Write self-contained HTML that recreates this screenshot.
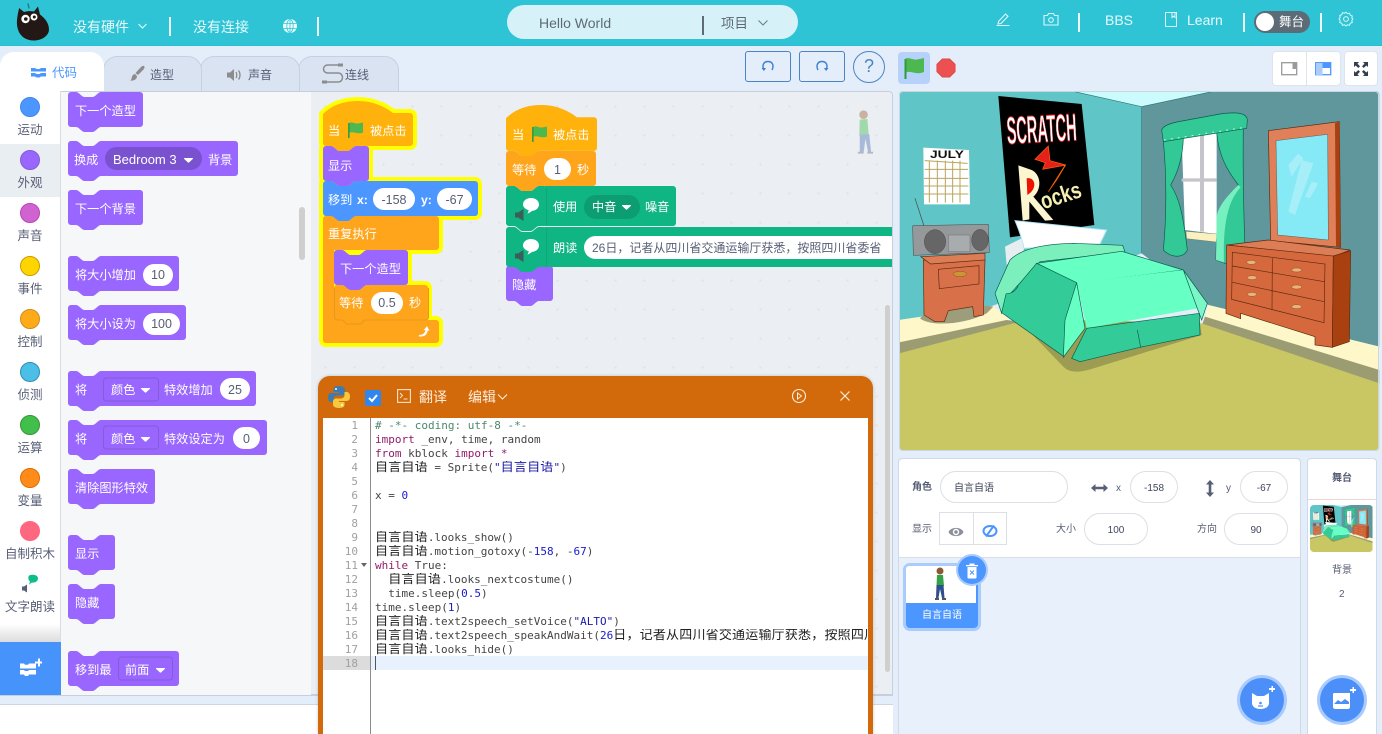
<!DOCTYPE html>
<html lang="zh">
<head>
<meta charset="utf-8">
<title>Hello World</title>
<style>
html,body{margin:0;padding:0}
body{position:relative;width:1382px;height:734px;overflow:hidden;background:#e4edfa;font-family:"Liberation Sans","Noto Sans CJK SC",sans-serif;color:#575e75}
.a{position:absolute}
.t{position:absolute;white-space:nowrap;line-height:1}
.hd{color:#e8fbfd;font-size:14px}
.dv{position:absolute;width:2px;height:19px;background:#eafcfe}
.tab{position:absolute;top:56px;height:35px;background:#d9e3f2;border:1px solid #c6d0e0;border-bottom:0;border-radius:14px 14px 0 0;box-sizing:border-box}
.cat{position:absolute;left:0;width:60px;text-align:center;font-size:12.5px;line-height:14px;color:#575e75;margin-top:1px}
.dot{position:absolute;left:20px;width:20px;height:20px;border-radius:50%;box-sizing:border-box}
.btn{position:absolute;box-sizing:border-box;border:1px solid #4a84c4;border-radius:3px;width:46px;height:31px;top:51px}
.inp{position:absolute;box-sizing:border-box;background:#fff;border:1px solid #dcdfe4;border-radius:16px;height:32px;font-size:10px;line-height:33px;text-align:center;color:#40465a}
.lb{position:absolute;font-size:10px;line-height:12px;color:#575e75;white-space:nowrap;margin-top:2px}
.ln{position:absolute;left:323px;width:35px;text-align:right;font:11px/14px "DejaVu Sans Mono",monospace;color:#a0a0a0;margin-top:1px}
.cd{position:absolute;left:375px;width:493px;overflow:hidden;white-space:pre;font:11px/14px "DejaVu Sans Mono","Noto Sans CJK SC",monospace;color:#444;margin-top:1px}
.cd i{font-style:normal;font-family:"Noto Sans CJK SC",sans-serif;font-size:13px;letter-spacing:.2px;color:#222;line-height:0}
.k{color:#931a68}.n{color:#1a1acd}.s{color:#1a1aa6}.c{color:#4c886b}
svg text{font-family:"Liberation Sans","Noto Sans CJK SC",sans-serif}
</style>
</head>
<body>
<!-- header -->
<div class="a" style="left:0;top:0;width:1382px;height:46px;background:#2ec4d6;border-bottom:1px solid #29bfd2;box-sizing:border-box"></div>
<svg class="a" style="left:14px;top:0" width="40" height="44" viewBox="0 0 40 44"><path d="M5 8l5 4c3-1 7-1 10-.5l4-5 2 8c4 3 9 8 9 15 0 6-7 11-15 11-8 0-14-4-16-11-2-6-1-12 1-21z" fill="#231815"/><path d="M14 3.500l1 5" stroke="#1c7f8c" stroke-width="1.500"/><circle cx="11.500" cy="19" r="4.200" fill="#fff"/><circle cx="11.800" cy="19" r="1.800" fill="#231815"/><circle cx="20" cy="17" r="3.500" fill="#fff"/><circle cx="20.300" cy="17" r="1.500" fill="#231815"/></svg>
<div class="t hd" style="left:73px;top:20px">没有硬件</div>
<svg class="a" style="left:137px;top:23px" width="11" height="7"><path d="M1.500 1l4 4 4-4" fill="none" stroke="#d8f6fa" stroke-width="1.200"/></svg>
<div class="dv" style="left:169px;top:17px"></div>
<div class="t hd" style="left:193px;top:20px">没有连接</div>
<svg class="a" style="left:282px;top:18px" width="16" height="16" viewBox="0 0 16 16"><circle cx="8" cy="8" r="7" fill="#eafcfe"/><g fill="none" stroke="#2ec4d6" stroke-width=".8"><ellipse cx="8" cy="8" rx="3.200" ry="6.500"/><path d="M1.500 5.500h13M1.500 10.500h13M8 1.500v13"/></g></svg>
<div class="dv" style="left:317px;top:17px"></div>
<div class="a" style="left:507px;top:5px;width:291px;height:34px;border-radius:17px;background:#d6f2f8"></div>
<div class="t" style="left:539px;top:16px;font-size:14px;color:#5e6b74">Hello World</div>
<div class="a" style="left:702px;top:16px;width:1.500px;height:19px;background:#5e6b74"></div>
<div class="t" style="left:721px;top:16px;font-size:13.500px;color:#5e6b74;margin-top:1px">项目</div>
<svg class="a" style="left:757px;top:19px" width="12" height="8"><path d="M1.500 1.500l4.500 4.500 4.500-4.500" fill="none" stroke="#6b7a83" stroke-width="1"/></svg>
<svg class="a" style="left:995px;top:11px" width="16" height="16" viewBox="0 0 16 16"><path d="M3.500 10.500l7-7.500 2.500 2.300-7 7.200-3 .5zM1.500 14.500h13" fill="none" stroke="#dcf7fb" stroke-width="1.100"/></svg>
<svg class="a" style="left:1043px;top:12px" width="16" height="14" viewBox="0 0 16 14"><path d="M1 3.500h3.500l1-2h5l1 2H15v9.500H1z" fill="none" stroke="#dcf7fb" stroke-width="1.100"/><circle cx="8" cy="8" r="2.300" fill="none" stroke="#dcf7fb" stroke-width="1.100"/></svg>
<div class="dv" style="left:1078px;top:13px"></div>
<div class="t hd" style="left:1105px;top:13px">BBS</div>
<svg class="a" style="left:1164px;top:11px" width="14" height="17" viewBox="0 0 14 17"><path d="M1.500 1.500h11v14h-11zM8 1.500v5l1.500-1.300L11 6.500v-5" fill="none" stroke="#dcf7fb" stroke-width="1"/></svg>
<div class="t hd" style="left:1187px;top:13px">Learn</div>
<div class="dv" style="left:1243px;top:13px"></div>
<div class="a" style="left:1254px;top:11px;width:56px;height:22px;border-radius:11px;background:#5c6b76"></div>
<div class="a" style="left:1256px;top:13px;width:18px;height:18px;border-radius:50%;background:#fff"></div>
<div class="t" style="left:1279px;top:16px;font-size:12.500px;color:#fff">舞台</div>
<div class="dv" style="left:1320px;top:13px"></div>
<svg class="a" style="left:1338px;top:11px" width="16" height="16" viewBox="0 0 16 16"><path d="M8 1.200l1.500 1.500 2-.5.800 2 2 .8-.5 2L15 8l-1.200 1.500.5 2-2 .8-.8 2-2-.5L8 15l-1.500-1.200-2 .5-.8-2-2-.8.5-2L1 8l1.200-1.500-.5-2 2-.8.800-2 2 .5z" fill="none" stroke="#dcf7fb" stroke-width="1"/><circle cx="8" cy="8" r="2.400" fill="none" stroke="#dcf7fb" stroke-width="1"/></svg>

<!-- tabs -->
<div class="tab" style="left:298px;width:101px"></div>
<div class="tab" style="left:200px;width:100px"></div>
<div class="tab" style="left:103px;width:99px"></div>
<div class="a" style="left:0;top:52px;width:104px;height:39px;background:#fff;border-radius:14px 14px 0 0"></div>
<svg class="a" style="left:31px;top:67px" width="15" height="11" viewBox="0 0 15 11"><path d="M0 1h4l1.500 1h3L10 1h5v3.500H0zM0 6h4l1.500 1h3L10 6h5v3.500H10L8.500 10.500h-3L4 9.500H0z" fill="#4c97ff"/></svg>
<div class="t" style="left:52px;top:67px;font-size:12.500px;color:#4c97ff">代码</div>
<svg class="a" style="left:129px;top:65px" width="17" height="18" viewBox="0 0 17 18"><path d="M15 1c1 1 .5 2.500-1 4l-5 5-2.500-2 5-5.500C13 1 14 .5 15 1zM6 9l2 2c0 3-2.500 5-7 4.500 2-1 1.500-2.500 2-4 .5-1.500 2-2.500 3-2.500z" fill="#8c8c8c"/></svg>
<div class="t" style="left:150px;top:69px;font-size:12px;color:#575e75">造型</div>
<svg class="a" style="left:227px;top:68px" width="16" height="14" viewBox="0 0 16 14"><path d="M0 4.500h3L7 1v12L3 9.500H0z" fill="#8c8c8c"/><path d="M9 4c1 1.500 1 4.500 0 6M11.500 2.500c2 2.500 2 6.500 0 9" stroke="#8c8c8c" stroke-width="1.300" fill="none"/></svg>
<div class="t" style="left:248px;top:69px;font-size:12px;color:#575e75">声音</div>
<svg class="a" style="left:321px;top:62px" width="24" height="24" viewBox="0 0 24 24"><path d="M19 3H7c-6 0-6 8 0 8h10c6 0 6 9 0 9H4" fill="none" stroke="#8c8c8c" stroke-width="1.500"/><rect x="17" y="1.500" width="5" height="3" fill="#8c8c8c"/><rect x="1" y="18.500" width="5" height="3" fill="#8c8c8c"/></svg>
<div class="t" style="left:345px;top:69px;font-size:12px;color:#575e75">连线</div>

<!-- toolbar -->
<div class="btn" style="left:745px"></div>
<div class="btn" style="left:799px"></div>
<svg class="a" style="left:761px;top:60px" width="14" height="12" viewBox="0 0 14 12"><path d="M3 10C.5 5 3 1.500 7 1.500s6.500 3.500 4 8.500" fill="none" stroke="#3c7fd0" stroke-width="1.400"/><path d="M0.500 8l2.500 3L5 8z" fill="#3c7fd0"/></svg>
<svg class="a" style="left:815px;top:60px" width="14" height="12" viewBox="0 0 14 12"><path d="M3 10C.5 5 3 1.500 7 1.500s6.500 3.500 4 8.500" fill="none" stroke="#3c7fd0" stroke-width="1.400"/><path d="M9 8l2 3 2.500-3z" fill="#3c7fd0"/></svg>
<div class="a" style="left:853px;top:51px;width:32px;height:32px;box-sizing:border-box;border:1px solid #4a84c4;border-radius:50%;text-align:center;font-size:18px;line-height:29px;color:#4a84c4">?</div>
<div class="a" style="left:898px;top:52px;width:32px;height:32px;border-radius:4px;background:#b6d2fa"></div>
<svg class="a" style="left:904px;top:57px" width="21" height="22" viewBox="0 0 21 22"><path d="M1 2c4-2.500 8 1.500 12 .5 2.500-.5 5-1 7-1.500v14c-3 1-5 1.500-8 1-3.500-.5-7-2-10-.5z" fill="#4cb84f"/><rect x="0.500" y="2" width="2" height="20" fill="#2f9b3c"/></svg>
<svg class="a" style="left:936px;top:58px" width="20" height="20" viewBox="0 0 22 22"><path d="M7 1h8l6 6v8l-6 6H7l-6-6V7z" fill="#ec5050" stroke="#e04848" stroke-width="1" stroke-linejoin="round"/></svg>
<div class="a" style="left:1273px;top:52px;width:67px;height:33px;background:#fff;box-shadow:0 0 0 1px #dde4ee;border-radius:3px"></div>
<div class="a" style="left:1306px;top:52px;width:1px;height:33px;background:#dde4ee"></div>
<div class="a" style="left:1345px;top:52px;width:32px;height:33px;background:#fff;box-shadow:0 0 0 1px #dde4ee;border-radius:3px"></div>
<svg class="a" style="left:1281px;top:62px" width="18" height="14" viewBox="0 0 18 14"><rect x=".7" y=".7" width="15" height="12" fill="none" stroke="#9a9a9a" stroke-width="1.300"/><rect x="11.500" y="1" width="4" height="6" fill="#9a9a9a"/></svg>
<svg class="a" style="left:1315px;top:62px" width="18" height="14" viewBox="0 0 18 14"><rect x=".7" y=".7" width="15" height="12" fill="#fff" stroke="#4c97ff" stroke-width="1.300"/><rect x="1" y="1" width="6.500" height="12" fill="#a9ccfd"/><rect x="7.500" y="1" width="8" height="5" fill="#4c97ff"/></svg>
<svg class="a" style="left:1354px;top:62px" width="14" height="14" viewBox="0 0 14 14"><path d="M0 0h5L3.500 1.700 6 4.300 4.300 6 1.700 3.500 0 5zM14 0v5l-1.700-1.500L9.700 6 8 4.300l2.500-2.600L9 0zM0 14V9l1.700 1.500L4.300 8 6 9.700l-2.500 2.600L5 14zM14 14H9l1.500-1.700L8 9.700 9.700 8l2.600 2.500L14 9z" fill="#333f4d"/></svg>

<!-- categories -->
<div class="a" style="left:0;top:91px;width:61px;height:551px;background:#fff;border-right:1px solid #d9dde3;box-sizing:border-box"></div>
<div class="a" style="left:0;top:144px;width:60px;height:53px;background:#e9eef2"></div>
<div class="a" style="left:0;top:624px;width:60px;height:18px;background:linear-gradient(#fff,#dcdcdc)"></div>
<div class="dot" style="top:97px;background:#4c97ff;border:1px solid #3f87e8"></div><div class="cat" style="top:122px">运动</div>
<div class="dot" style="top:150px;background:#9966ff;border:1px solid #855cd6"></div><div class="cat" style="top:175px">外观</div>
<div class="dot" style="top:203px;background:#cf63cf;border:1px solid #bd42bd"></div><div class="cat" style="top:228px">声音</div>
<div class="dot" style="top:256px;background:#ffd500;border:1px solid #cc9900"></div><div class="cat" style="top:281px">事件</div>
<div class="dot" style="top:309px;background:#ffab19;border:1px solid #cf8b17"></div><div class="cat" style="top:334px">控制</div>
<div class="dot" style="top:362px;background:#4cbfe6;border:1px solid #2e8eb8"></div><div class="cat" style="top:387px">侦测</div>
<div class="dot" style="top:415px;background:#40bf4a;border:1px solid #389438"></div><div class="cat" style="top:440px">运算</div>
<div class="dot" style="top:468px;background:#ff8c1a;border:1px solid #db6e00"></div><div class="cat" style="top:493px">变量</div>
<div class="dot" style="top:521px;background:#ff6680;border:1px solid #ff6680"></div><div class="cat" style="top:546px">自制积木</div>
<svg class="a" style="left:20px;top:574px" width="20" height="20" viewBox="0 0 20 20"><path d="M9 1.500c3-1.500 9-1 9 3 0 3-3.500 4.500-6 4l-3 2 1-3c-2-1.500-2-4.500-1-6z" fill="#0fbd8c"/><path d="M2 12.500h2l3-2v8l-3-2H2z" fill="#575e75"/></svg>
<div class="cat" style="top:599px">文字朗读</div>
<div class="a" style="left:0;top:642px;width:61px;height:53px;background:#4593fb"></div>
<svg class="a" style="left:18px;top:658px" width="24" height="20" viewBox="0 0 24 20"><path d="M2 5.500h4l1 1.200h3l1-1.200h7v5H2zM2 12h4l1 1h3l1-1h7v4.500H11l-1 1.500H7l-1-1.500H2z" fill="#fff"/><path d="M17 3.500h3V.5h2v3h2v2h-2v3h-2v-3h-3z" fill="#fff"/></svg>

<!-- palette + workspace -->
<div class="a" style="left:61px;top:91px;width:250px;height:604px;background:#f6f7f8;border-top:1px solid #c7cfdc;box-sizing:border-box"></div>
<div class="a" style="left:311px;top:91px;width:582px;height:604px;box-sizing:border-box;background-color:#ebeff4;background-image:radial-gradient(#e0e4e9 1px,transparent 1.400px);background-size:29px 29px;border:1px solid #c7cfdc;border-left:0;border-radius:0 4px 0 0"></div>
<div class="a" style="left:299px;top:207px;width:6px;height:53px;background:#cfcfcf;border-radius:3px"></div>
<div class="a" style="left:885px;top:305px;width:5px;height:367px;background:#cfcfcf;border-radius:3px"></div>
<div class="a" style="left:0;top:695px;width:893px;height:1px;background:#c7cfdc"></div>
<div class="a" style="left:0;top:704px;width:893px;height:30px;background:#fff;border-top:1px solid #cfd6e0;box-sizing:border-box"></div>

<svg class="a" style="left:0;top:0" width="1382" height="734" viewBox="0 0 1382 734">
<defs>
<g id="fl"><path d="M2 1c3-1.800 6 1 9 .5 1.800-.3 3.500-.8 5-1v10c-2 .7-3.500 1-5.500.6-3-.5-6-1.600-8.500-.3z" fill="#4cb84f"/><rect x="1" y="1" width="1.700" height="15" fill="#3d9d46"/></g>
<path id="b35" d="M0 3a3 3 0 0 1 3-3h5c1.200 0 2 .6 3 1.400l2.600 2.200c.9.8 1.800 1.400 3 1.400h7.800c1.200 0 2.100-.6 3-1.400l2.600-2.200c1-.8 1.800-1.400 3-1.400H38V35H33c-1.200 0-2 .6-3 1.400l-2.600 2.200c-.9.8-1.800 1.400-3 1.400h-7.800c-1.200 0-2.100-.6-3-1.400l-2.600-2.200c-1-.8-1.800-1.400-3-1.400H3a3 3 0 0 1-3-3z"/>
<path id="b41" d="M0 3a3 3 0 0 1 3-3h5c1.200 0 2 .6 3 1.400l2.600 2.200c.9.8 1.800 1.400 3 1.400h7.800c1.200 0 2.100-.6 3-1.400l2.600-2.200c1-.8 1.800-1.400 3-1.400H38V40H33c-1.200 0-2 .6-3 1.400l-2.600 2.200c-.9.8-1.800 1.400-3 1.400h-7.800c-1.200 0-2.100-.6-3-1.400l-2.600-2.200c-1-.8-1.800-1.400-3-1.400H3a3 3 0 0 1-3-3z"/>
<path id="hat" d="M0 13C9 4 21 0 35 0S61 5 70 12H87a3 3 0 0 1 3 3V42a3 3 0 0 1-3 3H33c-1.200 0-2 .6-3 1.400l-2.600 2.200c-.9.8-1.800 1.400-3 1.400h-7.800c-1.200 0-2.100-.6-3-1.400l-2.600-2.200c-1-.8-1.800-1.400-3-1.400H3a3 3 0 0 1-3-3z"/>
<path id="ar" d="M0 0h8.500c.5 0 .7.500.4.900L5 4.500c-.3.300-.7.300-1 0L.1.900C-.2.500 0 0 .5 0z" fill="#fff"/>
<clipPath id="pc"><rect x="61" y="92" width="250" height="603"/></clipPath>
<clipPath id="wc"><rect x="311" y="92" width="581" height="603"/></clipPath>
<g id="s1">
<g fill="#ffa51c"><rect x="323" y="216" width="116" height="34" rx="3"/><rect x="323" y="216" width="11" height="127" rx="3"/><rect x="323" y="320" width="116" height="23" rx="3"/><rect x="330" y="312" width="20" height="12"/></g>
<g fill="#ffa51c" transform="translate(334 285)"><use href="#b35"/><rect x="36" width="58" height="35" rx="3"/></g>
<g fill="#9966ff" transform="translate(334 250)"><use href="#b35"/><rect x="36" width="38" height="35" rx="3"/></g>
<g fill="#4c97ff" transform="translate(323 181)"><use href="#b35"/><rect x="36" width="119" height="35" rx="3"/></g>
<g fill="#9966ff" transform="translate(323 146)"><use href="#b35"/><rect x="36" width="10" height="35" rx="3"/></g>
<use href="#hat" fill="#ffb20c" transform="translate(323 101)"/>
</g>
</defs>

<!-- palette blocks -->
<g clip-path="url(#pc)" font-size="12.200" fill="#fff">
<g fill="#9966ff">
<g transform="translate(68 92)"><use href="#b35"/><rect x="36" width="39" height="35" rx="3"/></g>
<g transform="translate(68 141)"><use href="#b35"/><rect x="36" width="134" height="35" rx="3"/></g>
<g transform="translate(68 190)"><use href="#b35"/><rect x="36" width="39" height="35" rx="3"/></g>
<g transform="translate(68 256)"><use href="#b35"/><rect x="36" width="75" height="35" rx="3"/></g>
<g transform="translate(68 305)"><use href="#b35"/><rect x="36" width="82" height="35" rx="3"/></g>
<g transform="translate(68 371)"><use href="#b35"/><rect x="36" width="152" height="35" rx="3"/></g>
<g transform="translate(68 420)"><use href="#b35"/><rect x="36" width="163" height="35" rx="3"/></g>
<g transform="translate(68 469)"><use href="#b35"/><rect x="36" width="51" height="35" rx="3"/></g>
<g transform="translate(68 535)"><use href="#b35"/><rect x="36" width="11" height="35" rx="3"/></g>
<g transform="translate(68 584)"><use href="#b35"/><rect x="36" width="11" height="35" rx="3"/></g>
<g transform="translate(68 651)"><use href="#b35"/><rect x="36" width="75" height="35" rx="3"/></g>
</g>
<rect x="105" y="147" width="97" height="23" rx="11.500" fill="#7a52d0"/>
<rect x="143" y="264" width="30" height="22" rx="11" fill="#fff"/>
<rect x="143" y="313" width="37" height="22" rx="11" fill="#fff"/>
<rect x="103.500" y="378" width="55" height="23" rx="3" fill="#9966ff" stroke="#855cd6"/>
<rect x="220" y="378" width="30" height="22" rx="11" fill="#fff"/>
<rect x="103.500" y="426" width="55" height="23" rx="3" fill="#9966ff" stroke="#855cd6"/>
<rect x="233" y="427" width="27" height="22" rx="11" fill="#fff"/>
<rect x="118.500" y="657" width="54" height="23" rx="3" fill="#9966ff" stroke="#855cd6"/>
<text x="75" y="115">下一个造型</text>
<text x="74" y="164">换成</text><text x="113" y="164" font-size="13">Bedroom 3</text><use href="#ar" x="184" y="158"/><text x="208" y="164">背景</text>
<text x="75" y="213">下一个背景</text>
<text x="75" y="279">将大小增加</text><text x="158" y="279" fill="#575e75" text-anchor="middle" font-size="12.500">10</text>
<text x="75" y="328">将大小设为</text><text x="161.500" y="328" fill="#575e75" text-anchor="middle" font-size="12.500">100</text>
<text x="75" y="394">将</text><text x="111" y="394">颜色</text><use href="#ar" x="141" y="388"/><text x="164" y="394">特效增加</text><text x="235" y="394" fill="#575e75" text-anchor="middle" font-size="12.500">25</text>
<text x="75" y="443">将</text><text x="111" y="443">颜色</text><use href="#ar" x="141" y="437"/><text x="164" y="443">特效设定为</text><text x="246.500" y="443" fill="#575e75" text-anchor="middle" font-size="12.500">0</text>
<text x="75" y="492">清除图形特效</text>
<text x="75" y="558">显示</text>
<text x="75" y="607">隐藏</text>
<text x="75" y="674">移到最</text><text x="125" y="674">前面</text><use href="#ar" x="156" y="668"/>
</g>

<!-- scripts -->
<g clip-path="url(#wc)" font-size="12.200" fill="#fff">
<!-- script 1 -->
<use href="#s1" stroke="#ffff00" stroke-width="8" stroke-linejoin="round"/>
<use href="#s1"/>
<path d="M334.500 288v29a3 3 0 0 0 3 3h5l4 4h14l4-4h61a3 3 0 0 0 3-3v-29" fill="none" stroke="#e8961a" stroke-width="1"/>
<text x="328" y="135">当</text><use href="#fl" x="347" y="122"/><text x="370" y="135">被点击</text>
<text x="328" y="170">显示</text>
<text x="328" y="204">移到</text><text x="357" y="204" font-weight="bold">x:</text><rect x="373" y="188" width="42" height="22" rx="11"/><text x="394" y="204" text-anchor="middle" fill="#575e75" font-size="12.500">-158</text><text x="421" y="204" font-weight="bold">y:</text><rect x="437" y="188" width="35" height="22" rx="11"/><text x="454.500" y="204" text-anchor="middle" fill="#575e75" font-size="12.500">-67</text>
<text x="328" y="238">重复执行</text>
<text x="340" y="273">下一个造型</text>
<text x="339" y="307">等待</text><rect x="371" y="292" width="32" height="22" rx="11"/><text x="387" y="307" text-anchor="middle" fill="#575e75" font-size="12.500">0.5</text><text x="409" y="307">秒</text>
<path d="M419 335c4 0 6-2 6.500-5l-2 .3 3.500-4 2.500 4.500-1.800-.3c-.5 4-3 6.500-8.700 6z" fill="#fff"/>
<!-- script 2 -->
<g fill="#9966ff" transform="translate(506 266)"><use href="#b35"/><rect x="36" width="11" height="35" rx="3"/></g>
<g fill="#10b584" transform="translate(506 227)"><use href="#b41"/><rect x="36" width="400" height="40" rx="3"/></g>
<g fill="#10b584" transform="translate(506 186)"><use href="#b41"/><rect x="36" width="134" height="40" rx="3"/></g>
<path d="M546.500 188v37M546.500 229v37" stroke="#0ea97b"/>
<g fill="#ffa51c" transform="translate(506 151)"><use href="#b35"/><rect x="36" width="54" height="35" rx="3"/></g>
<use href="#hat" fill="#ffb20c" transform="translate(506 105) scale(1.011 1.020)"/>
<text x="512" y="139">当</text><use href="#fl" x="531" y="126"/><text x="553" y="139">被点击</text>
<text x="512" y="174">等待</text><rect x="544" y="158" width="27" height="22" rx="11"/><text x="557.500" y="174" text-anchor="middle" fill="#575e75" font-size="12.500">1</text><text x="577" y="174">秒</text>
<g id="sp"><path d="M531 198c4.500 0 8 2.700 8 6.500 0 3.500-3 6-6.500 6.300l-5 3 1.300-3.500c-3-1-5.800-3-5.800-5.800 0-3.800 3.500-6.500 8-6.500z" fill="#fff"/><path d="M515 212.500h3l5.500-3.500v12l-5.500-3.500h-3z" fill="#3c5e5a"/></g>
<use href="#sp" y="41"/>
<text x="553" y="211">使用</text><rect x="584" y="195" width="56" height="24" rx="12" fill="#0d9d72"/><text x="592" y="211">中音</text><use href="#ar" x="622" y="205"/><text x="645" y="211">噪音</text>
<text x="553" y="252">朗读</text><rect x="584" y="236" width="340" height="23" rx="11.500"/><text x="592" y="252" fill="#575e75" font-size="12">26日，记者从四川省交通运输厅获悉，按照四川省委省</text>
<text x="512" y="289">隐藏</text>
<!-- sprite preview -->
<g opacity=".45" transform="translate(855 109) scale(.95)"><circle cx="9" cy="6" r="4.500" fill="#a5683f"/><path d="M5 11l8-.5 1.500 17-10 .5z" fill="#4cbf56"/><path d="M5 27l10-.5 2 20h-3l-3-15-2 15H5z" fill="#5a7ab8"/><path d="M3 46h6M13 46h6" stroke="#777" stroke-width="2"/></g>
</g>

<!-- stage -->
<g transform="translate(900 90) scale(.33333)">
<clipPath id="sc"><rect x="-3" y="3" width="1441" height="1080" rx="12"/></clipPath>
<g id="st" clip-path="url(#sc)">
<path d="M-3 3H520L725 50V490L270 650 -3 690z" fill="#60c5c7"/>
<path d="M725 50L945 3H1438V770L925 645 725 490z" fill="#5f979d"/>
<path d="M515 3L725 50 945 3z" fill="#ccfbfd" stroke="#2d7a7a" stroke-width="2"/>
<path d="M725 50V490" stroke="#2d7a7a" stroke-width="2"/>
<path d="M-3 690L280 648 330 690 -3 760z" fill="#fdf7c9"/>
<path d="M-3 757L320 690 400 700 -3 792z" fill="#9c9c72"/>
<path d="M925 645L1438 770V842L915 680z" fill="#fdf7c9"/>
<path d="M915 680L1438 840V882L905 708z" fill="#9c9c72"/>
<path d="M-3 790L340 700H905L1438 880V1090H-3z" fill="#c9c763"/>
<!-- poster -->
<path d="M295 18L545 42 583 405 330 442z" fill="#000"/>
<text x="322" y="162" transform="rotate(-3 322 162)" font-size="116" font-weight="bold" fill="#fff" stroke="#d22" stroke-width="3" textLength="210" lengthAdjust="spacingAndGlyphs">SCRATCH</text>
<path d="M445 168L405 208 436 218 428 238 495 226 445 305 470 270 497 225 450 212z" fill="#e8201c" stroke="#f60" stroke-width="2"/>
<path d="M355 226L368 392 388 388 388 335 435 392 460 390 400 320C425 300 425 255 395 240z" fill="#fbf5d0"/>
<path d="M380 265C405 260 415 295 382 315z" fill="#e10"/>
<text x="430" y="358" transform="rotate(-18 430 358)" font-size="70" font-weight="bold" fill="#f4eeb0" textLength="125" lengthAdjust="spacingAndGlyphs">ocks</text>
<!-- calendar -->
<path d="M70 173L207 180 210 343 72 343z" fill="#fff"/>
<text x="90" y="204" font-size="32" font-weight="bold" fill="#111" textLength="102" lengthAdjust="spacingAndGlyphs">JULY</text>
<path d="M74 212L203 220M74 238H204M72 265H205M72 288H205M72 312H205M88 212V338M112 212V338M136 212V338M158 212V338M180 212V338" stroke="#b9a45a" stroke-width="3"/>
<!-- radio -->
<path d="M45 325L72 408" stroke="#444" stroke-width="2"/>
<path d="M38 407L265 403 268 488 40 496z" fill="#96999b" stroke="#444" stroke-width="1.500"/>
<ellipse cx="105" cy="455" rx="32" ry="36" fill="#666" stroke="#333"/><ellipse cx="240" cy="450" rx="25" ry="32" fill="#666" stroke="#333"/>
<rect x="145" y="435" width="65" height="50" fill="#a9acae" stroke="#555"/>
<!-- nightstand -->
<path d="M60 685c30 25 130 20 200-15l20-20-50-5H100z" fill="#9d9d7b"/>
<path d="M70 510H255L250 675 222 680 218 650 145 662 133 695 105 695 72 675z" fill="#d8704a" stroke="#5c2a10" stroke-width="2"/>
<path d="M62 500L255 490V510L92 522z" fill="#dd7d55" stroke="#5c2a10" stroke-width="2"/>
<path d="M115 538L237 527V582L118 596z" fill="#d8704a" stroke="#5c2a10" stroke-width="2"/>
<ellipse cx="180" cy="552" rx="20" ry="8" fill="#c99535" stroke="#6b3b10"/>
<!-- window -->
<path d="M845 145L950 130V432L855 420z" fill="#fff"/>
<path d="M900 135H912V425H900zM845 265H950V275H845z" fill="#c4c4ca"/>
<path d="M858 424L950 432V456L860 446z" fill="#fbf1c0" stroke="#6a6a50"/>
<path d="M790 155L850 145C848 200 835 245 812 285 835 320 848 360 862 480 850 505 815 505 790 480 800 380 800 250 790 155z" fill="#33c996" stroke="#0a5c4a" stroke-width="2"/>
<path d="M950 125L1030 110C1028 250 1032 400 1036 508L975 520 948 510C948 430 950 380 1015 285 985 245 955 200 950 125z" fill="#33c996" stroke="#0a5c4a" stroke-width="2"/>
<path d="M950 380C955 345 990 310 1015 285L1022 292C985 330 968 400 972 518L948 510z" fill="#77f0c0"/>
<path d="M785 120Q790 105 830 96L960 72Q1040 60 1042 90L1040 115 790 155z" fill="#33c996" stroke="#0a5c4a" stroke-width="2"/>
<path d="M792 150L1035 112" stroke="#c9fff0" stroke-width="3" stroke-dasharray="5 16"/>
<!-- dresser -->
<path d="M1105 122L1318 95 1322 472 1112 452z" fill="#df8059" stroke="#5c2a10" stroke-width="2"/>
<path d="M1305 100L1318 95 1322 472 1308 470z" fill="#a84010"/>
<path d="M1128 152L1283 133 1285 450 1133 435z" fill="#86e9f6" stroke="#333"/>
<path d="M1165 225L1195 190 1210 205 1175 260zM1165 365L1205 210 1240 220 1185 375zM1215 320L1235 275 1255 280 1230 325z" fill="#a6eef8"/>
<path d="M980 465L1105 450 1350 480 1300 500z" fill="#dd7d55" stroke="#5c2a10" stroke-width="2"/>
<path d="M980 465L1300 498 1297 772 1245 765V740L1022 670V686L978 670z" fill="#d5693d" stroke="#5c2a10" stroke-width="2"/>
<path d="M1300 498L1352 482 1348 755 1297 772z" fill="#a84010" stroke="#5c2a10" stroke-width="2"/>
<path d="M997 487L1275 522 1272 698 995 628zM1117 505L1116 660M997 528L1273 575M997 577L1273 635" fill="none" stroke="#5c2a10" stroke-width="2"/>
<g fill="#e8b27a" stroke="#6b3b10"><ellipse cx="1054" cy="517" rx="14" ry="6"/><ellipse cx="1056" cy="563" rx="14" ry="6"/><ellipse cx="1056" cy="613" rx="14" ry="6"/><ellipse cx="1190" cy="540" rx="15" ry="6"/><ellipse cx="1190" cy="591" rx="15" ry="6"/><ellipse cx="1190" cy="650" rx="15" ry="6"/></g>
<!-- bed -->
<path d="M350 685L490 830C510 850 540 848 580 835L905 735 900 700z" fill="#9c9c52"/>
<path d="M345 392L620 420 600 462 372 475C365 440 355 415 345 392z" fill="#fff" stroke="#a9e2f2" stroke-width="3"/>
<path d="M315 470L365 445 372 480 320 525z" fill="#e6eef0"/>
<path d="M285 610L330 510C360 480 420 462 520 460L668 466 675 486 420 515 350 590 325 618 305 670z" fill="#7bf0bd" stroke="#0a5c4a" stroke-width="2"/>
<path d="M410 520L665 484 850 540 530 580z" fill="#66ffc4" stroke="#0a5c4a" stroke-width="2"/>
<path d="M410 520L530 578 492 800 305 668 318 612C340 610 350 600 355 585z" fill="#33cc99" stroke="#0a5c4a" stroke-width="2"/>
<path d="M530 578L850 540 892 655 560 715z" fill="#66ffc4"/>
<path d="M850 540L922 640 905 690 892 655z" fill="#7bf7c7" stroke="#0a5c4a" stroke-width="2"/>
<path d="M515 805L560 715 898 670 900 735 720 772 540 815z" fill="#33cc99" stroke="#0a5c4a" stroke-width="2"/>
<path d="M530 578L495 690 490 802 555 715z" fill="#66ffc4" stroke="#0a5c4a" stroke-width="2"/>
<path d="M712 720L722 772" stroke="#0a5c4a" stroke-width="2"/>
</g>
</g>
</svg>
<div class="a" style="left:899px;top:91px;width:480px;height:360px;box-sizing:border-box;border:1px solid #c9d8de;border-radius:4px"></div>

<!-- sprite panel -->
<div class="a" style="left:898px;top:458px;width:403px;height:276px;box-sizing:border-box;background:#e8f0fb;border:1px solid #cfd9e8;border-bottom:0;border-radius:4px 4px 0 0"></div>
<div class="a" style="left:899px;top:459px;width:401px;height:99px;background:#fff;border-bottom:1px solid #d9dfe8;box-sizing:border-box;border-radius:4px 4px 0 0"></div>
<div class="lb" style="left:912px;top:480px;font-weight:bold">角色</div>
<div class="inp" style="left:940px;top:471px;width:128px;text-align:left;padding-left:13px">自言自语</div>
<svg class="a" style="left:1091px;top:483px" width="17" height="10" viewBox="0 0 17 10"><path d="M0 5l4.500-4v2.700h8V1L17 5l-4.500 4V6.300h-8V9z" fill="#575e75"/></svg>
<div class="lb" style="left:1116px;top:481px">x</div>
<div class="inp" style="left:1130px;top:471px;width:48px">-158</div>
<svg class="a" style="left:1205px;top:480px" width="10" height="17" viewBox="0 0 10 17"><path d="M5 0l4 4.500H6.300v8H9L5 17 1 12.500h2.700v-8H1z" fill="#575e75"/></svg>
<div class="lb" style="left:1226px;top:481px">y</div>
<div class="inp" style="left:1240px;top:471px;width:48px">-67</div>
<div class="lb" style="left:912px;top:522px">显示</div>
<div class="a" style="left:939px;top:512px;width:68px;height:33px;box-sizing:border-box;border:1px solid #dcdfe4"></div>
<div class="a" style="left:973px;top:512px;width:1px;height:33px;background:#dcdfe4"></div>
<svg class="a" style="left:948px;top:526px" width="16" height="12" viewBox="0 0 16 12"><path d="M.5 6C3 .5 13 .5 15.500 6 13 11.500 3 11.500 .5 6z" fill="#8a8f9a"/><circle cx="8" cy="6" r="3.200" fill="#fff"/><circle cx="8" cy="6" r="1.800" fill="#8a8f9a"/></svg>
<svg class="a" style="left:982px;top:524px" width="16" height="14" viewBox="0 0 16 14"><ellipse cx="8" cy="7" rx="6.500" ry="5" fill="none" stroke="#4c97ff" stroke-width="2"/><path d="M4 12.500L12 1.500" stroke="#4c97ff" stroke-width="2"/></svg>
<div class="lb" style="left:1056px;top:522px">大小</div>
<div class="inp" style="left:1084px;top:513px;width:64px">100</div>
<div class="lb" style="left:1197px;top:522px">方向</div>
<div class="inp" style="left:1224px;top:513px;width:64px">90</div>

<div class="a" style="left:903px;top:563px;width:78px;height:68px;box-sizing:border-box;background:#4c97ff;border:3px solid #a9ccfd;border-radius:7px"></div>
<div class="a" style="left:906px;top:566px;width:70px;height:37px;background:#fff;border-radius:3px 3px 0 0"></div>
<div class="t" style="left:922px;top:610px;font-size:10px;color:#fff;margin-top:1px">自言自语</div>
<svg class="a" style="left:933px;top:567px" width="14" height="34" viewBox="0 0 14 34"><circle cx="7" cy="4" r="3.500" fill="#8a5a35"/><path d="M4 8h6l1 11H3.500z" fill="#35a24a"/><path d="M3.500 18h7l1 13H9l-2-9-1.500 9H3z" fill="#2f4f8f"/><path d="M2 31h4v2H2zM9 31h4v2H9z" fill="#555"/></svg>
<div class="a" style="left:958px;top:556px;width:28px;height:28px;border-radius:50%;background:#4c97ff;box-shadow:0 0 0 2px #a9ccfd"></div>
<svg class="a" style="left:965px;top:562px" width="14" height="17" viewBox="0 0 14 17"><path d="M1 3h12v1.300H1zM4.500 1.500h5V3h-5z" fill="#fff"/><path d="M2.500 5h9v10.500c0 .5-.5 1-1 1h-7c-.5 0-1-.5-1-1z" fill="#fff"/><path d="M5 8.500l4 4M9 8.500l-4 4" stroke="#4c97ff" stroke-width="1"/></svg>

<div class="a" style="left:1237px;top:675px;width:50px;height:50px;border-radius:50%;background:#a9ccfd"></div>
<div class="a" style="left:1240px;top:678px;width:44px;height:44px;border-radius:50%;background:#4c8ff8"></div>
<svg class="a" style="left:1250px;top:686px" width="26" height="26" viewBox="0 0 26 26"><path d="M2 7l5 3h7l5-3v10c0 4-4 6-8.500 6S2 21 2 17z" fill="#fff"/><circle cx="10.500" cy="17" r="1.300" fill="#4c8ff8"/><path d="M8 20h5" stroke="#4c8ff8" stroke-width="1.200"/><path d="M19 2h2.500V0h1.500v2h2v2h-2v2h-1.500V4H19z" fill="#fff"/></svg>

<!-- stage panel -->
<div class="a" style="left:1307px;top:458px;width:70px;height:276px;box-sizing:border-box;background:#fff;border:1px solid #cfd9e8;border-bottom:0;border-radius:4px 4px 0 0"></div>
<div class="a" style="left:1308px;top:499px;width:68px;height:1px;background:#ecd5d5"></div>
<div class="t" style="left:1332px;top:473px;font-size:10px;font-weight:bold;margin-top:1px">舞台</div>
<svg class="a" style="left:1310px;top:505px;border-radius:4px" width="63" height="47" viewBox="0 0 1446 1080"><use href="#st" transform="translate(0 -3)"/></svg>
<div class="t" style="left:1332px;top:565px;font-size:10px;margin-top:1px">背景</div>
<div class="t" style="left:1339px;top:589px;font-size:10px;margin-top:1px">2</div>
<div class="a" style="left:1317px;top:675px;width:50px;height:50px;border-radius:50%;background:#a9ccfd"></div>
<div class="a" style="left:1320px;top:678px;width:44px;height:44px;border-radius:50%;background:#4c8ff8"></div>
<svg class="a" style="left:1331px;top:687px" width="26" height="24" viewBox="0 0 26 24"><path d="M3 6h16v14c0 1-1 2-2 2H4c-1 0-2-1-2-2V7c0-.5.5-1 1-1z" fill="#fff"/><path d="M3 17l4-4 3 2 4-3 4 3v2H3z" fill="#4c8ff8"/><path d="M19 2h2.500V0H23v2h2v2h-2v2h-1.500V4H19z" fill="#fff"/></svg>

<!-- code window -->
<div class="a" style="left:318px;top:376px;width:555px;height:358px;background:#d2690a;border-radius:12px 12px 0 0;box-shadow:0 0 3px rgba(0,0,0,.2)"></div>
<svg class="a" style="left:327px;top:385px" width="24" height="24" viewBox="0 0 24 24"><path d="M11.800 1C7 1 6.500 3 6.500 4.500V7H12v1H4.500C2 8 1 10 1 12.500S2 17 4.500 17H6.500v-3c0-2 1.500-3.500 3.500-3.500h5c1.500 0 3-1.300 3-3V4.500C18 2.500 16 1 11.800 1z" fill="#3d7bb5"/><circle cx="9" cy="4" r="1" fill="#fff"/><path d="M12.200 23c4.800 0 5.300-2 5.300-3.500V17H12v-1h7.500c2.500 0 3.500-2 3.500-4.500S22 7 19.500 7H17.500v3c0 2-1.500 3.500-3.500 3.500H9c-1.500 0-3 1.300-3 3v3c0 2 2 3.500 6.200 3.500z" fill="#f4c93d"/><circle cx="15" cy="20" r="1" fill="#fff"/></svg>
<div class="a" style="left:365px;top:390px;width:16px;height:16px;background:#2f86ee;border-radius:2px"></div>
<svg class="a" style="left:365px;top:390px" width="16" height="16"><path d="M4 8l3 3 5-6" fill="none" stroke="#fff" stroke-width="2"/></svg>
<svg class="a" style="left:397px;top:389px" width="14" height="14" viewBox="0 0 14 14"><rect x=".6" y=".6" width="12.800" height="12.800" fill="none" stroke="#f8e3cd" stroke-width="1.100"/><path d="M3 4l2.500 2.500L3 9M6.500 10h4" fill="none" stroke="#f8e3cd"/></svg>
<div class="t" style="left:419px;top:390px;font-size:14px;color:#fdeedd">翻译</div>
<div class="t" style="left:468px;top:390px;font-size:14px;color:#fdeedd">编辑</div>
<svg class="a" style="left:497px;top:393px" width="11" height="8"><path d="M1 1.500l4.500 4.500 4.500-4.500" fill="none" stroke="#fdeedd" stroke-width="1.100"/></svg>
<svg class="a" style="left:791px;top:388px" width="16" height="16" viewBox="0 0 16 16"><circle cx="8" cy="8" r="6.500" fill="none" stroke="#fdeedd" stroke-width="1.100"/><path d="M6.500 5l4 3-4 3z" fill="none" stroke="#fdeedd"/></svg>
<svg class="a" style="left:840px;top:391px" width="10" height="10"><path d="M.5.5l9 9M9.500.5l-9 9" stroke="#fdeedd" stroke-width="1.200"/></svg>

<div class="a" style="left:323px;top:418px;width:545px;height:316px;background:#fff;overflow:hidden"></div>
<div class="a" style="left:323px;top:418px;width:47px;height:316px;background:#fff;border-right:1px solid #8c8c8c"></div>
<div class="a" style="left:323px;top:656px;width:47px;height:14px;background:#dcdcdc"></div>
<div class="a" style="left:371px;top:656px;width:497px;height:14px;background:#e8f2fe"></div>
<div class="a" style="left:375px;top:656px;width:1px;height:14px;background:#555"></div>
<div class="ln" style="top:418px">1</div><div class="ln" style="top:432px">2</div><div class="ln" style="top:446px">3</div><div class="ln" style="top:460px">4</div><div class="ln" style="top:474px">5</div><div class="ln" style="top:488px">6</div><div class="ln" style="top:502px">7</div><div class="ln" style="top:516px">8</div><div class="ln" style="top:530px">9</div><div class="ln" style="top:544px">10</div><div class="ln" style="top:558px">11</div><div class="ln" style="top:572px">12</div><div class="ln" style="top:586px">13</div><div class="ln" style="top:600px">14</div><div class="ln" style="top:614px">15</div><div class="ln" style="top:628px">16</div><div class="ln" style="top:642px">17</div><div class="ln" style="top:656px">18</div>
<svg class="a" style="left:361px;top:563px" width="6" height="4"><path d="M0 0h6L3 4z" fill="#666"/></svg>
<div class="cd" style="top:418px"><span class="c"># -*- coding: utf-8 -*-</span></div>
<div class="cd" style="top:432px"><span class="k">import</span> _env, time, random</div>
<div class="cd" style="top:446px"><span class="k">from</span> kblock <span class="k">import</span> <span class="k">*</span></div>
<div class="cd" style="top:460px"><i>自言自语</i> = Sprite(<span class="s">"</span><i style="color:#1a1aa6">自言自语</i><span class="s">"</span>)</div>
<div class="cd" style="top:488px">x = <span class="n">0</span></div>
<div class="cd" style="top:530px"><i>自言自语</i>.looks_show()</div>
<div class="cd" style="top:544px"><i>自言自语</i>.motion_gotoxy(-<span class="n">158</span>, -<span class="n">67</span>)</div>
<div class="cd" style="top:558px"><span class="k">while</span> True:</div>
<div class="cd" style="top:572px">  <i>自言自语</i>.looks_nextcostume()</div>
<div class="cd" style="top:586px">  time.sleep(<span class="n">0.5</span>)</div>
<div class="cd" style="top:600px">time.sleep(<span class="n">1</span>)</div>
<div class="cd" style="top:614px"><i>自言自语</i>.text2speech_setVoice(<span class="s">"ALTO"</span>)</div>
<div class="cd" style="top:628px"><i>自言自语</i>.text2speech_speakAndWait(<span class="n">26</span><i>日，记者从四川省交通运输厅获悉，按照四川省委省</i></div>
<div class="cd" style="top:642px"><i>自言自语</i>.looks_hide()</div>
</body>
</html>
